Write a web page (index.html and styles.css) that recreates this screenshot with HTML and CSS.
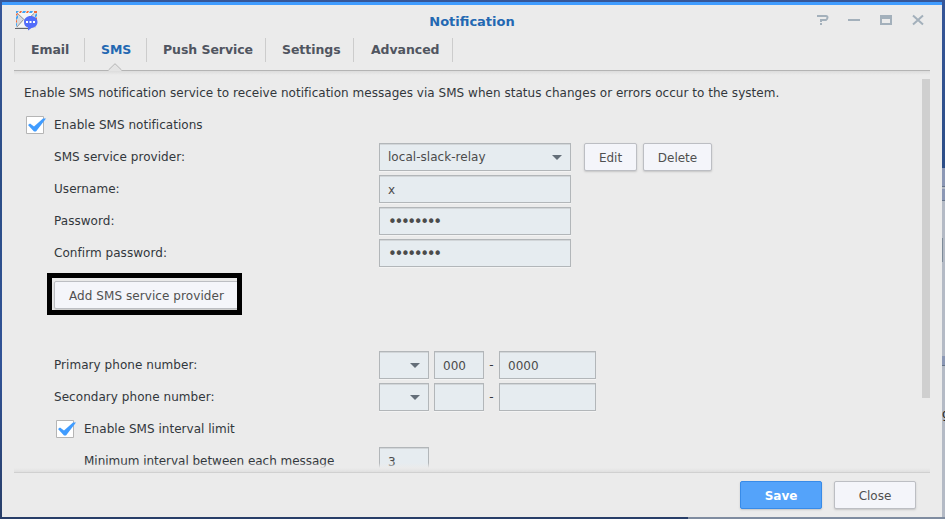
FILE: index.html
```html
<!DOCTYPE html>
<html lang="en">
<head>
<meta charset="utf-8">
<title>Notification</title>
<link rel="stylesheet" href="styles.css">
</head>
<body>
<div class="backdrop"><div class="bg-panel"><i class="bg-strip"></i><i class="bg-strip second"></i><i class="bg-field"></i><i class="bg-strip third"></i><span>g</span></div></div>
<main class="window">
  <header class="titlebar">
    <svg class="app-icon" width="25" height="22" viewBox="0 0 25 22">
      <path fill="#d9dadc" d="M2 2h20v16H2z"/>
      <path fill="#f5f5f5" d="M3 2h18l-9 9zM3 17l7-7 3 2 4-2 4 7z"/>
      <path fill="none" stroke="#96979b" d="M3.500 3.500l8 7.500 8.500-7.500M3 17l6-7"/>
      <path fill="#40a4f5" d="M2 1h3L3 3H2zM9 1h3l-1 2H8zM16 1h3l-1 2h-3zM2 7l2-2v3l-2 2zM2 14l1-2v3l-1 2zM21 5l2-2v3l-2 2z"/>
      <path fill="#f06b3c" d="M6 1h2L7 3H5zM13 1h2l-1 2h-2zM20 1h3v2h-3zM2 4l2-1v1L2 6zM2 11l1-2v3l-1 1zM21 9l2-2v3h-2z"/>
      <path fill="#62666c" d="M1 18h13v1H1z"/>
      <path fill="#536dfa" d="M16.500 6c4 0 7 2.500 7 6s-2.500 5.500-6 6L14 20.500V17.500c-2.500-.500-4-2.500-4-5.500 0-3.500 3-6 6.500-6z"/>
      <path fill="#fff" d="M12 11h2v2h-2zM15.500 11h2v2h-2zM19 11h2v2h-2z"/>
    </svg>
    <h1>Notification</h1>
    <svg class="controls" width="108" height="12" viewBox="0 0 108 12" fill="none" stroke="#a3b0bb" stroke-width="2">
      <path d="M0 2h9q1.500 0 1.500 1.500T9 6H4v2M3 10h2"/>
      <path d="M31 6h12"/>
      <path d="M64 2v8h10V2M63 2h12M63 4h12"/>
      <path d="M96 1.500l10 9M106 1.500l-10 9"/>
    </svg>
  </header>
  <nav class="tabs">
    <a class="t-email">Email</a><a class="t-sms active">SMS</a><a class="t-push">Push Service</a><a class="t-settings">Settings</a><a class="t-advanced">Advanced</a>
    <svg class="pointer" width="14" height="8" viewBox="0 0 14 8"><path fill="#e4e4e4" d="M0 8l7-7 7 7z"/><path fill="none" stroke="#b4b4b4" d="M.5 7L7 .700 13.500 7"/></svg>
  </nav>
  <section class="pane">
    <div class="row"><span class="intro">Enable SMS notification service to receive notification messages via SMS when status changes or errors occur to the system.</span></div>
    <div class="row check-row"><svg class="check" width="21" height="18" viewBox="0 0 21 18"><path fill="#fff" stroke="#b5b5b5" d="M.5.5h17v17H.5z"/><path fill="#409cff" d="M2 9l2-1.500 4 3L17 2.500h3L10 15.500H8z"/></svg><span>Enable SMS notifications</span></div>
    <div class="row field-row"><label>SMS service provider:</label><div class="input select wide"><span class="raised">local-slack-relay</span><i class="arrow"></i></div><button class="edit">Edit</button><button class="delete">Delete</button></div>
    <div class="row field-row"><label>Username:</label><div class="input wide">x</div></div>
    <div class="row field-row"><label>Password:</label><div class="input wide dots">••••••••</div></div>
    <div class="row field-row"><label>Confirm password:</label><div class="input wide dots">••••••••</div></div>
    <div class="add-row"><div class="highlight"><button class="add">Add SMS service provider</button></div></div>
    <div class="row field-row"><label>Primary phone number:</label><div class="input select small"><i class="arrow"></i></div><div class="input small code">000</div><span class="dash">-</span><div class="input number">0000</div></div>
    <div class="row field-row"><label>Secondary phone number:</label><div class="input select small"><i class="arrow"></i></div><div class="input small code"></div><span class="dash">-</span><div class="input number"></div></div>
    <div class="row check-row nested"><svg class="check" width="21" height="18" viewBox="0 0 21 18"><path fill="#fff" stroke="#b5b5b5" d="M.5.5h17v17H.5z"/><path fill="#409cff" d="M2 9l2-1.500 4 3L17 2.500h3L10 15.500H8z"/></svg><span>Enable SMS interval limit</span></div>
    <div class="row field-row nested-field"><label>Minimum interval between each message</label><div class="input small">3</div></div>
    <i class="scrollbar"></i><i class="fade"></i>
  </section>
  <footer><button class="save">Save</button><button class="close">Close</button></footer>
</main>
</body>
</html>
```
FILE: styles.css
```css
* { box-sizing: border-box; }
body {
  margin: 0; width: 945px; height: 519px; overflow: hidden; position: relative;
  background: #2e4d85; padding: 2px;
  font: 12px/16px "DejaVu Sans", sans-serif; color: #32373c;
}
.backdrop { position: absolute; inset: 0; background: linear-gradient(#365698, #2b4d86 35%, #315397 70%, #283e68); }
.backdrop::after { content: ""; position: absolute; left: 688px; right: 0; bottom: 0; height: 2px; background: #7f8ca0; }
.bg-panel { position: absolute; left: 942px; top: 168px; width: 3px; height: 351px; background: #b4bac5; overflow: hidden; }
.bg-strip { position: absolute; top: 0; left: 0; width: 3px; height: 19px; background: #8c98b5; border-bottom: 1px solid #66758a; }
.bg-strip.second { top: 21px; height: 12px; }
.bg-strip.third { top: 188px; height: 10px; }
.bg-field { position: absolute; top: 70px; left: 0; width: 1px; height: 24px; background: #7e8b99; }
.bg-panel span { position: absolute; top: 238px; left: 0; color: #222; }
.window { position: relative; width: 940px; height: 515px; background: #ebebeb; border-top: 3px solid #409cff; display: flex; flex-direction: column; }
.titlebar { height: 33px; display: flex; justify-content: center; position: relative; }
h1 { margin: 9px 0 0; font-size: 13px; line-height: 16px; color: #2368b2; }
.app-icon { position: absolute; left: 12px; top: 5px; }
.controls { position: absolute; left: 815px; top: 9px; }
.tabs { position: relative; height: 33px; margin: 0 12px; display: flex; border-bottom: 1px solid #b4b4b4; }
.tabs a { height: 24px; border-left: 1px solid #ccc; padding-left: 16px; font-weight: bold; font-size: 12.500px; line-height: 23px; letter-spacing: -.06px; color: #505560; white-space: nowrap; }
.t-email { width: 70px; } .t-sms { width: 62px; } .t-push { width: 119px; } .t-settings { width: 88px; }
.tabs .t-advanced { width: 100px; padding-left: 17px; border-right: 1px solid #ccc; }
.tabs .active { color: #2368b2; }
.pointer { position: absolute; left: 94px; top: 25px; }
.pane { position: relative; height: 401px; margin: 0 12px; padding: 6px 0 0 10px; overflow: hidden; background: linear-gradient(#dcdcdc, #ebebeb 4px); }
.row { height: 32px; display: flex; align-items: center; white-space: nowrap; }
.intro { letter-spacing: .028px; }
label { letter-spacing: .05px; }
.check { margin-left: 2px; margin-right: 7px; }
.check-row > span { letter-spacing: .03px; }
.nested { padding-left: 30px; }
label { width: 325px; margin-left: 30px; }
.nested-field label { width: 295px; margin-left: 60px; letter-spacing: -.03px; }
.input { height: 28px; border: 1px solid #b2b6b9; background: #e6ecf0; box-shadow: inset 0 1px #d2d6d9, 0 1px #f3f3f3; padding-left: 8px; line-height: 28px; color: #4b4b4b; }
.wide { width: 192px; } .small { width: 50px; } .code { margin-left: 5px; } .number { width: 97px; }
.dots { font-size: 15px; letter-spacing: -2.400px; }
.dash { width: 15px; text-align: center; }
.select { display: flex; align-items: center; justify-content: space-between; padding-right: 8px; }
.small.select { justify-content: flex-end; }
.raised { line-height: 26px; letter-spacing: .04px; }
.arrow { border: 5px solid transparent; border-top-color: #646e78; border-bottom: 0; margin-top: 1px; }
button { font: 12px/26px "DejaVu Sans", sans-serif; color: #505050; height: 28px; padding: 1px 0 0; border: 1px solid #bcbec3; border-radius: 2px; background: #f4f5fa; box-shadow: 0 1px 2px #c4c4c4; }
.edit { width: 53px; margin-left: 13px; } .delete { width: 69px; margin-left: 6px; }
.add-row { height: 80px; padding: 4px 0 0 23px; }
.highlight { width: 195px; height: 42px; border: 5px solid #000; padding: 3px 0 0 2px; overflow: hidden; }
.add { width: 190px; text-align: left; padding-left: 14px; white-space: nowrap; letter-spacing: .07px; }
.scrollbar { position: absolute; right: 0; top: 8px; width: 8px; height: 319px; background: #cfcfcf; }
.fade { position: absolute; left: 0; right: 0; bottom: 0; height: 9px; background: linear-gradient(#ebebeb00, #ebebeb 5px, #e0e0e0); }
footer { flex: 1; margin: 0 12px; border-top: 1px solid #d0d0d0; padding: 8px 14px 0; display: flex; justify-content: flex-end; gap: 12px; }
footer button { width: 82px; }
.save { background: #54a3fa; border-color: #388be8; color: #fff; font-weight: bold; }
```
